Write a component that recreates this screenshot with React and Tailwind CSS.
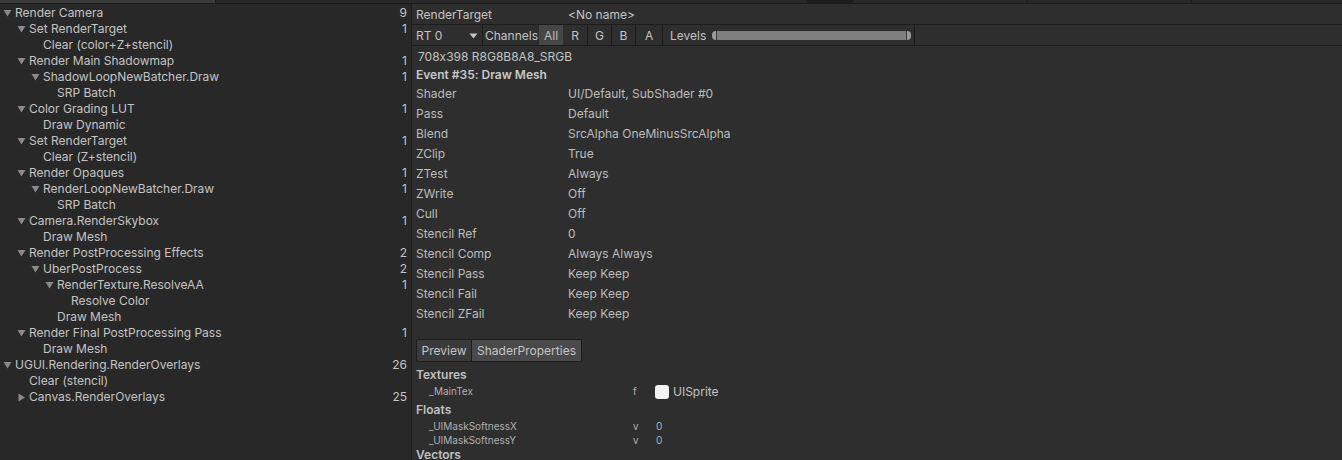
import React from "react";

const tree = [
  ["Render Camera", 0, "9", "down"],
  ["Set RenderTarget", 1, "1", "down"],
  ["Clear (color+Z+stencil)", 2, "", null],
  ["Render Main Shadowmap", 1, "1", "down"],
  ["ShadowLoopNewBatcher.Draw", 2, "1", "down"],
  ["SRP Batch", 3, "", null],
  ["Color Grading LUT", 1, "1", "down"],
  ["Draw Dynamic", 2, "", null],
  ["Set RenderTarget", 1, "1", "down"],
  ["Clear (Z+stencil)", 2, "", null],
  ["Render Opaques", 1, "1", "down"],
  ["RenderLoopNewBatcher.Draw", 2, "1", "down"],
  ["SRP Batch", 3, "", null],
  ["Camera.RenderSkybox", 1, "1", "down"],
  ["Draw Mesh", 2, "", null],
  ["Render PostProcessing Effects", 1, "2", "down"],
  ["UberPostProcess", 2, "2", "down"],
  ["RenderTexture.ResolveAA", 3, "1", "down"],
  ["Resolve Color", 4, "", null],
  ["Draw Mesh", 3, "", null],
  ["Render Final PostProcessing Pass", 1, "1", "down"],
  ["Draw Mesh", 2, "", null],
  ["UGUI.Rendering.RenderOverlays", 0, "26", "down"],
  ["Clear (stencil)", 1, "", null],
  ["Canvas.RenderOverlays", 1, "25", "right"],
];

const indent = ["pl-0", "pl-[14px]", "pl-[28px]", "pl-[42px]", "pl-[56px]"];

const props = [
  ["Shader", "UI/Default, SubShader #0"],
  ["Pass", "Default"],
  ["Blend", "SrcAlpha OneMinusSrcAlpha"],
  ["ZClip", "True"],
  ["ZTest", "Always"],
  ["ZWrite", "Off"],
  ["Cull", "Off"],
  ["Stencil Ref", "0"],
  ["Stencil Comp", "Always Always"],
  ["Stencil Pass", "Keep Keep"],
  ["Stencil Fail", "Keep Keep"],
  ["Stencil ZFail", "Keep Keep"],
];

function Arrow({ dir }) {
  if (!dir) return <span className="w-[15px] shrink-0" />;
  return (
    <span className="w-[15px] shrink-0 flex items-center pl-[3px]">
      {dir === "down" ? (
        <svg width="9" height="8" viewBox="0 0 9 8">
          <polygon points="0.5,1 8.5,1 4.5,7.5" fill="#8a8a8a" />
        </svg>
      ) : (
        <svg width="9" height="9" viewBox="0 0 9 9">
          <polygon points="1.5,0.5 8,4.5 1.5,8.5" fill="#8a8a8a" />
        </svg>
      )}
    </span>
  );
}

export default function App() {
  return (
    <div
      className="w-[1342px] h-[460px] overflow-hidden bg-[#282828] text-[#c4c4c4] flex flex-col [font-feature-settings:'calt'_0]"
      style={{ fontFamily: "Inter, 'Noto Sans', sans-serif" }}
    >
      {/* top strip */}
      <div className="h-[4px] shrink-0 flex border-b border-[#1c1c1c] bg-[#282828]">
        <div className="w-[216px] bg-[#3a3a3a] border-r border-[#1c1c1c]" />
        <div className="w-[591px]" />
        <div className="w-[46px] bg-[#1c1c1c] rounded-b-sm" />
        <div className="w-[175px] border-r border-[#1c1c1c]" />
        <div className="w-[164px] border-r border-[#1c1c1c]" />
        <div className="flex-1" />
      </div>

      <div className="flex flex-1 min-h-0">
        {/* event tree */}
        <div className="w-[412px] shrink-0 pt-[1px] pr-[4px] bg-[#282828] border-r border-[#1c1c1c] text-[12px]">
          {tree.map(([name, level, count, dir], i) => (
            <div key={i} className={`h-[16px] flex items-center ${indent[level]}`}>
              <Arrow dir={dir} />
              <span className="flex-1 whitespace-nowrap leading-none">{name}</span>
              <span className="leading-none">{count}</span>
            </div>
          ))}
        </div>

        {/* details */}
        <div className="flex-1 bg-[#2e2e2e] flex flex-col text-[12px]">
          <div className="h-[21px] shrink-0 flex items-center pl-[4px] pt-[2px] border-b border-[#1c1c1c]">
            <span className="w-[152px]">RenderTarget</span>
            <span>&lt;No name&gt;</span>
          </div>

          <div className="h-[21px] shrink-0 flex items-stretch border-b border-[#1c1c1c]">
            <div className="w-[71px] flex items-center justify-between pl-[4px] pr-[4px] pt-[1px] border-r border-[#1c1c1c]">
              <span>RT 0</span>
              <svg width="9" height="6" viewBox="0 0 9 6">
                <polygon points="0.5,0.5 8.5,0.5 4.5,5.5" fill="#c4c4c4" />
              </svg>
            </div>
            <div className="flex items-center pl-[2px] pr-[1px] pt-[1px]">Channels</div>
            <div className="w-[24px] flex items-center justify-center pt-[1px] bg-[#464646] text-[#bdbdbd]">All</div>
            <div className="w-[25px] flex items-center justify-center pt-[1px] border-r border-[#1c1c1c]">R</div>
            <div className="w-[24px] flex items-center justify-center pt-[1px] border-r border-[#1c1c1c]">G</div>
            <div className="w-[24px] flex items-center justify-center pt-[1px] border-r border-[#1c1c1c]">B</div>
            <div className="w-[27px] flex items-center justify-center pt-[1px] border-r border-[#1c1c1c]">A</div>
            <div className="flex items-center pl-[7px] pr-[6px] pt-[1px]">Levels</div>
            <div className="w-[203px] flex items-center border-r border-[#1c1c1c] pr-[3px]">
              <span className="w-[4px] h-[9px] rounded-l-full bg-[#9a9a9a]" />
              <span className="flex-1 h-[9px] bg-[#7f7f7f] border-x border-[#3a3a3a]" />
              <span className="w-[4px] h-[9px] rounded-r-full bg-[#9a9a9a]" />
            </div>
            <div className="flex-1" />
          </div>

          <div className="pl-[4px]">
            <div className="h-[18px] flex items-center pl-[2px] mt-[2px]">708x398 R8G8B8A8_SRGB</div>
            <div className="h-[18px] flex items-center font-semibold text-[#c8c8c8]">Event #35: Draw Mesh</div>
            {props.map(([k, v]) => (
              <div key={k} className="h-[20px] flex items-center text-[#bdbdbd]">
                <span className="w-[152px]">{k}</span>
                <span>{v}</span>
              </div>
            ))}

            <div className="mt-[15px] flex h-[23px]">
              <div className="w-[56px] flex items-center justify-center bg-[#3a3a3a] border border-[#1c1c1c] rounded-l-[2px]">Preview</div>
              <div className="w-[110px] flex items-center justify-center bg-[#4a4a4a] border border-l-0 border-[#1c1c1c] rounded-r-[2px]">ShaderProperties</div>
            </div>

            <div className="h-[14px] mt-[6px] flex items-center font-semibold text-[#c0c0c0]">Textures</div>
            <div className="h-[19px] flex items-center text-[10px] text-[#b0b0b0]">
              <span className="w-[217px] pl-[13px]">_MainTex</span>
              <span className="w-[22px]">f</span>
              <span className="w-[14px] h-[14px] rounded-[3px] bg-[#f2f2f2] mr-[4px]" />
              <span className="text-[12px] text-[#c4c4c4]">UISprite</span>
            </div>
            <div className="h-[18px] flex items-center font-semibold text-[#c0c0c0]">Floats</div>
            <div className="h-[14px] flex items-center text-[10px] text-[#b0b0b0]">
              <span className="w-[217px] pl-[13px]">_UIMaskSoftnessX</span>
              <span className="w-[23px]">v</span>
              <span>0</span>
            </div>
            <div className="h-[14px] flex items-center text-[10px] text-[#b0b0b0]">
              <span className="w-[217px] pl-[13px]">_UIMaskSoftnessY</span>
              <span className="w-[23px]">v</span>
              <span>0</span>
            </div>
            <div className="h-[16px] flex items-center font-semibold text-[#c0c0c0]">Vectors</div>
          </div>
        </div>
      </div>
    </div>
  );
}
